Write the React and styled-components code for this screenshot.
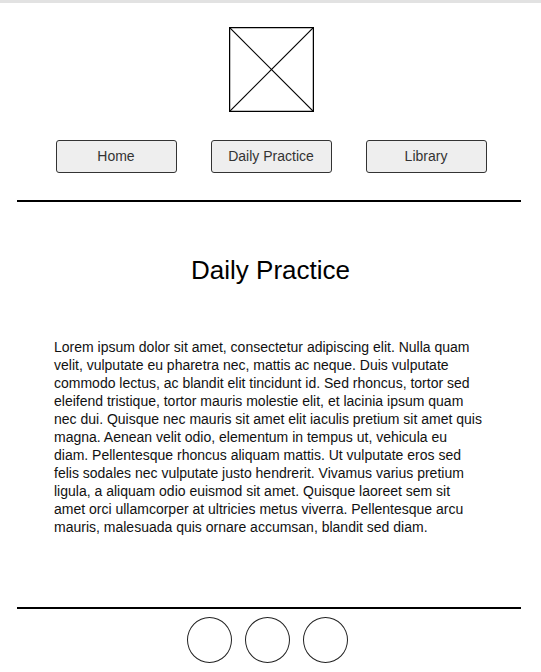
import React from "react";
import styled, { createGlobalStyle } from "styled-components";

const GlobalStyle = createGlobalStyle`
  html, body {
    margin: 0;
    padding: 0;
    background: #fff;
  }
  body {
    font-family: Arial, "Liberation Sans", sans-serif;
    color: #111;
  }
`;

const Page = styled.div`
  width: 541px;
  min-height: 672px;
  display: flex;
  flex-direction: column;
  border-top: 3px solid #e2e2e2;
  box-sizing: border-box;
`;

const Header = styled.header`
  display: flex;
  flex-direction: column;
  align-items: center;
  padding-top: 24px;
`;

const LogoBox = styled.div`
  width: 85px;
  height: 85px;
  margin-left: 1px;

  svg {
    display: block;
  }
`;

const Nav = styled.nav`
  display: flex;
  gap: 34px;
  margin-top: 28px;
  padding-left: 1px;
`;

const NavButton = styled.button`
  width: 121px;
  height: 33px;
  box-sizing: border-box;
  border: 1px solid #333;
  border-radius: 3px;
  background: #eeeeee;
  color: #333;
  font-family: Arial, "Liberation Sans", sans-serif;
  font-size: 14px;
  line-height: 16px;
  padding: 0 0 2px;
  cursor: pointer;
`;

const Rule = styled.hr`
  width: 504px;
  margin: ${(p) => p.$top}px 0 0 17px;
  border: none;
  border-top: 2px solid #000;
  height: 0;
`;

const Main = styled.main`
  display: flex;
  flex-direction: column;
  align-items: center;
`;

const Title = styled.h1`
  margin: 53px 0 0;
  font-size: 26px;
  font-weight: normal;
  line-height: 30px;
  color: #000;
`;

const Body = styled.p`
  width: 430px;
  margin: 53px 0 0;
  padding-right: 3px;
  font-size: 14px;
  line-height: 18px;
  color: #111;
`;

const Footer = styled.footer`
  display: flex;
  justify-content: center;
  gap: 13px;
  margin-top: 8px;
  padding-right: 6px;
`;

const Dot = styled.div`
  width: 45px;
  height: 46px;
  box-sizing: border-box;
  border: 1px solid #222;
  border-radius: 50%;
`;

export default function App() {
  return (
    <>
      <GlobalStyle />
      <Page>
        <Header>
          <LogoBox>
            <svg width="85" height="85" viewBox="0 0 85 85">
              <rect x="0.5" y="0.5" width="84" height="84" fill="none" stroke="#000" strokeWidth="1.5" />
              <line x1="0" y1="0" x2="85" y2="85" stroke="#000" strokeWidth="1.2" />
              <line x1="85" y1="0" x2="0" y2="85" stroke="#000" strokeWidth="1.2" />
            </svg>
          </LogoBox>
          <Nav>
            <NavButton>Home</NavButton>
            <NavButton>Daily Practice</NavButton>
            <NavButton>Library</NavButton>
          </Nav>
        </Header>
        <Rule $top={27} />
        <Main>
          <Title>Daily Practice</Title>
          <Body>
            Lorem ipsum dolor sit amet, consectetur adipiscing elit. Nulla quam
            velit, vulputate eu pharetra nec, mattis ac neque. Duis vulputate
            commodo lectus, ac blandit elit tincidunt id. Sed rhoncus, tortor sed
            eleifend tristique, tortor mauris molestie elit, et lacinia ipsum quam
            nec dui. Quisque nec mauris sit amet elit iaculis pretium sit amet quis
            magna. Aenean velit odio, elementum in tempus ut, vehicula eu diam.
            Pellentesque rhoncus aliquam mattis. Ut vulputate eros sed felis
            sodales nec vulputate justo hendrerit. Vivamus varius pretium ligula, a
            aliquam odio euismod sit amet. Quisque laoreet sem sit amet orci
            ullamcorper at ultricies metus viverra. Pellentesque arcu mauris,
            malesuada quis ornare accumsan, blandit sed diam.
          </Body>
        </Main>
        <Rule $top={71} />
        <Footer>
          <Dot />
          <Dot />
          <Dot />
        </Footer>
      </Page>
    </>
  );
}
